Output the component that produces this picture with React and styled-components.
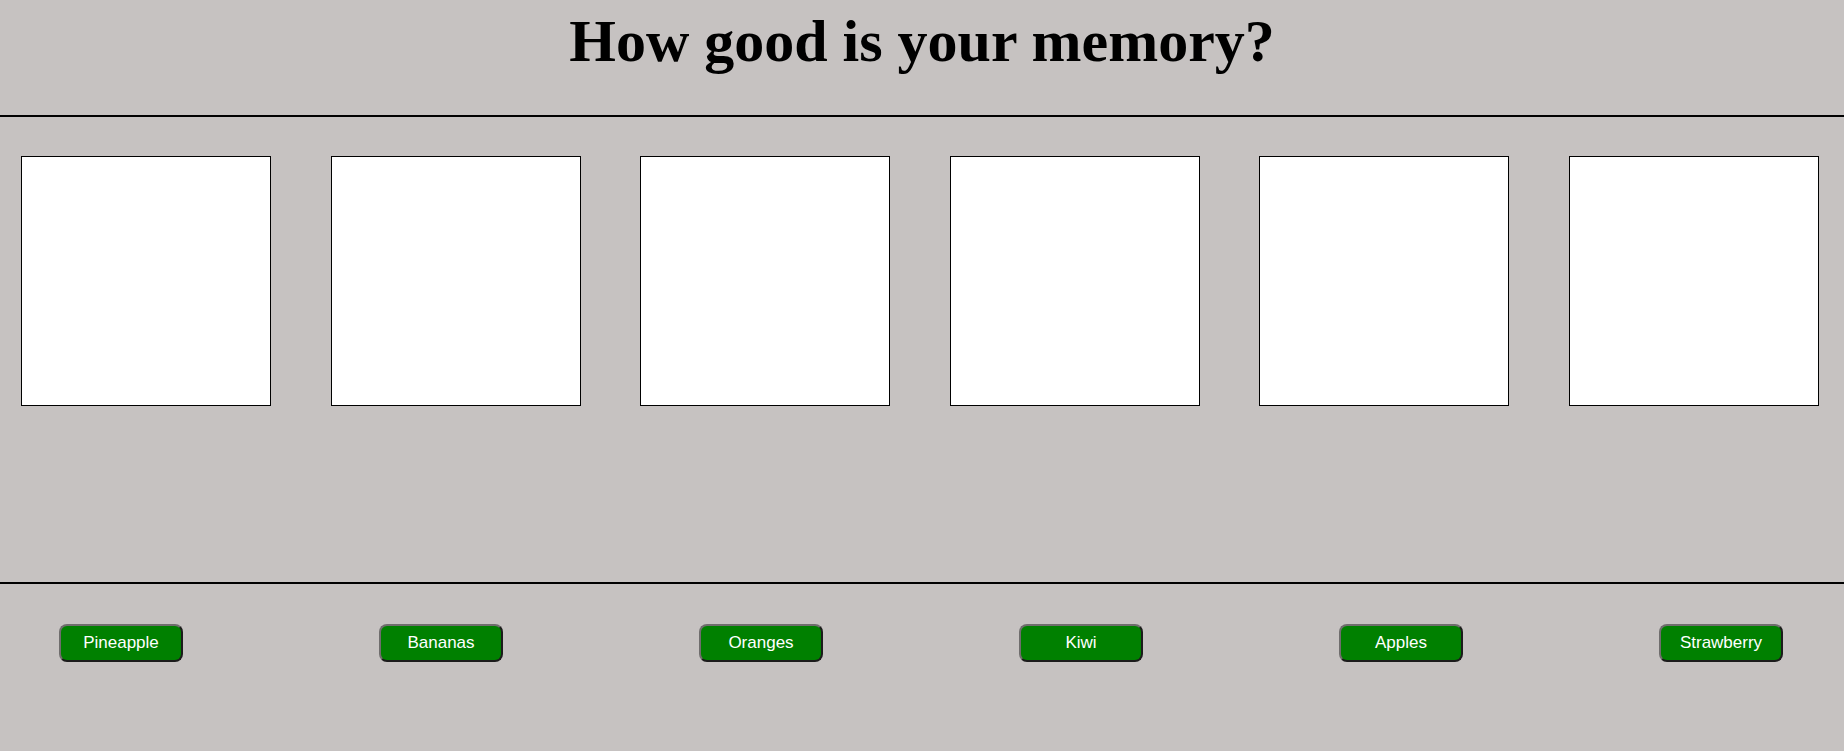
import React from "react";
import styled, { createGlobalStyle } from "styled-components";

const GlobalStyle = createGlobalStyle`
  html, body {
    margin: 0;
    padding: 0;
    background: #c6c2c1;
  }
  body {
    font-family: "Liberation Serif", "Times New Roman", serif;
  }
`;

const Page = styled.div`
  width: 1844px;
  min-height: 751px;
  background: #c6c2c1;
  display: flex;
  flex-direction: column;
`;

const Header = styled.header`
  height: 107px;
  padding-top: 8px;
  border-bottom: 2px solid #000;
  text-align: center;
`;

const Title = styled.h1`
  margin: 0;
  font-family: "Liberation Serif", "Times New Roman", serif;
  font-weight: bold;
  font-size: 60px;
  line-height: 66px;
  color: #000;
`;

const Board = styled.section`
  height: 467px;
  padding: 39px 25px 0 21px;
  box-sizing: border-box;
  border-bottom: 2px solid #000;
  display: flex;
  align-items: flex-start;
  justify-content: space-between;
`;

const Card = styled.div`
  width: 250px;
  height: 250px;
  box-sizing: border-box;
  background: #fff;
  border: 1px solid #000;
`;

const Choices = styled.div`
  display: flex;
  gap: 196px;
  padding: 40px 0 0 59px;
`;

const ChoiceButton = styled.button`
  width: 124px;
  height: 38px;
  box-sizing: border-box;
  background: #008000;
  color: #fff;
  font-family: "Liberation Sans", Arial, sans-serif;
  font-size: 17px;
  border-radius: 8px;
  border-style: solid;
  border-width: 2px;
  border-color: #6f6d6d #1c1c1c #1c1c1c #6f6d6d;
  padding: 0;
  cursor: pointer;
`;

const fruits = ["Pineapple", "Bananas", "Oranges", "Kiwi", "Apples", "Strawberry"];

export default function App() {
  return (
    <>
      <GlobalStyle />
      <Page>
        <Header>
          <Title>How good is your memory?</Title>
        </Header>
        <Board>
          {fruits.map((f) => (
            <Card key={f} />
          ))}
        </Board>
        <Choices>
          {fruits.map((f) => (
            <ChoiceButton key={f}>{f}</ChoiceButton>
          ))}
        </Choices>
      </Page>
    </>
  );
}
